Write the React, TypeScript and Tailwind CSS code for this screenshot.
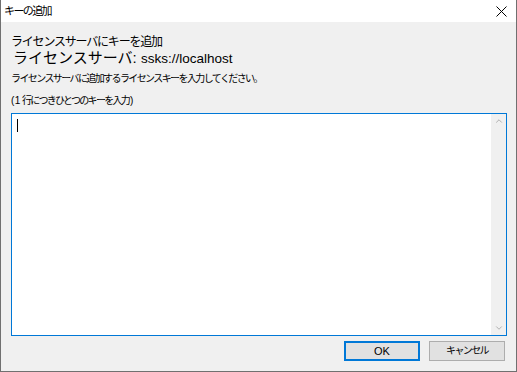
import { ChevronUp, ChevronDown } from "lucide-react"

const font = "font-['Liberation_Sans','Noto_Sans_CJK_JP',sans-serif]"

export default function App() {
  return (
    <div className={`flex h-[372px] w-[517px] flex-col border-x border-b border-[#707070] bg-[#f0f0f0] text-black ${font}`}>
      {/* Title bar */}
      <div className="flex h-[22px] shrink-0 items-center justify-between bg-white pl-[3px] pr-[8px]">
        <span className="text-[11px] leading-none tracking-[-1.6px]">キーの追加</span>
        <svg width="11" height="11" viewBox="0 0 11 11" className="mr-[1px]">
          <path d="M0.5 0.5 L10.5 10.5 M10.5 0.5 L0.5 10.5" stroke="#000" strokeWidth="1" fill="none" />
        </svg>
      </div>

      {/* Body */}
      <div className="flex flex-1 flex-col pb-[10px] pl-[10px] pr-[9px]">
        <div className="mt-[13px] text-[12px] leading-[14px] tracking-[-1.2px]">ライセンスサーバにキーを追加</div>
        <div className="ml-[2px] text-[15px] leading-[18px]">
          ライセンスサーバ: <span className="text-[13.5px]">ssks://localhost</span>
        </div>
        <div className="mt-[5px] text-[10px] leading-[12px] tracking-[-1.6px]">
          ライセンスサーバに追加するライセンスキーを入力してください。
        </div>
        <div className="mt-[10px] text-[10px] leading-[12px]">
          <span className="mr-[1px] tracking-[0.5px]">(1</span>
          <span className="tracking-[-1.7px]">行につきひとつのキーを入力</span>
          <span className="ml-[1px]">)</span>
        </div>

        {/* Key input */}
        <div className="mt-[6px] flex flex-1 border border-[#0078d7] bg-white">
          <div className="flex-1 pl-[5px] pt-[5px]">
            <div className="h-[13px] w-px bg-black" />
          </div>
          <div className="flex w-[15px] flex-col items-center justify-between bg-[#f0f0f0] py-[2px]">
            <ChevronUp className="h-[10px] w-[10px] text-[#a3a3a3]" strokeWidth={2} />
            <ChevronDown className="h-[10px] w-[10px] text-[#a3a3a3]" strokeWidth={2} />
          </div>
        </div>

        {/* Buttons */}
        <div className="mr-[2px] mt-[5px] flex justify-end gap-[9px]">
          <button className="flex h-[20px] w-[76px] items-center justify-center border-2 border-[#0078d7] bg-[#e1e1e1] text-[11px] leading-none">
            OK
          </button>
          <button className="flex h-[20px] w-[76px] items-center justify-center border border-[#adadad] bg-[#e1e1e1] text-[10px] leading-none tracking-[-1.6px]">
            キャンセル
          </button>
        </div>
      </div>
    </div>
  )
}
